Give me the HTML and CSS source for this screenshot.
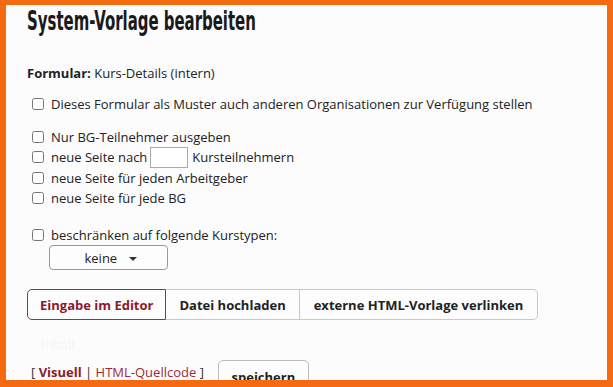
FILE: index.html
```html
<!DOCTYPE html>
<html lang="de">
<head>
  <meta charset="UTF-8">
  <title>System-Vorlage bearbeiten</title>
  <link rel="stylesheet" href="styles.css">
</head>
<body>

  <div class="frame">
    <h1><span>System-Vorlage bearbeiten</span></h1>

    <p class="formular"><b>Formular:</b> Kurs-Details (intern)</p>

    <label class="row single"><input type="checkbox"> Dieses Formular als Muster auch anderen Organisationen zur Verfügung stellen</label>

    <div class="group">
      <label class="row"><input type="checkbox"> Nur BG-Teilnehmer ausgeben</label>
      <label class="row"><input type="checkbox"> neue Seite nach <input type="text" class="num"> Kursteilnehmern</label>
      <label class="row"><input type="checkbox"> neue Seite für jeden Arbeitgeber</label>
      <label class="row"><input type="checkbox"> neue Seite für jede BG</label>
    </div>

    <label class="row single limit"><input type="checkbox"> beschränken auf folgende Kurstypen:</label>
    <button class="select">keine <span class="caret"></span></button>

    <div class="tabs">
      <button class="tab active">Eingabe im Editor</button>
      <button class="tab">Datei hochladen</button>
      <button class="tab">externe HTML-Vorlage verlinken</button>
    </div>

    <p class="faint">Inhalt</p>

    <div class="bottom">
      <span class="mode">[ <b>Visuell</b> | <a href="#">HTML-Quellcode</a> ]</span>
      <button class="save">speichern</button>
    </div>
  </div>

</body>
</html>
```

FILE: styles.css
```css
body {
  margin: 0;
  font-family: 'Open Sans', sans-serif;
  font-size: 13px;
  color: #222;
}

.frame {
  box-sizing: border-box;
  height: 387px;
  overflow: hidden;
  background-color: #fcfcfc;
  border-style: solid;
  border-color: #f36a10;
  border-width: 5px 6px 7px 6px;
  padding-left: 21px;
}

h1 {
  margin: 0;
  height: 32px;
  line-height: 32px;
  font-family: 'DejaVu Sans', sans-serif;
  font-stretch: condensed;
  font-weight: 600;
  font-size: 27px;
  color: #1a1a1a;
}

h1 span {
  display: inline-block;
  transform: scaleX(0.615);
  transform-origin: left center;
}

.formular {
  margin: 26px 0 0;
  line-height: 20px;
}

.row {
  display: flex;
  align-items: center;
  height: 20.5px;
  white-space: nowrap;
}

.row input[type="checkbox"] {
  margin: 0 7px 0 5px;
  width: 12px;
  height: 12px;
}

.single {
  margin-top: 11px;
}

.group {
  margin-top: 12px;
}

.limit {
  margin-top: 16px;
}

.num {
  box-sizing: border-box;
  width: 38px;
  height: 21px;
  margin: 0 4px 0 3px;
  border: 1px solid #aaa;
  background: #fff;
}

.select {
  display: block;
  box-sizing: border-box;
  width: 119px;
  height: 25px;
  margin: 0 0 0 22px;
  padding: 0 0 0 4px;
  border: 1px solid #999;
  border-radius: 4px;
  background: #fdfdfd;
  font-family: 'Open Sans', sans-serif;
  font-size: 13px;
  color: #222;
}

.caret {
  display: inline-block;
  margin-left: 8px;
  vertical-align: middle;
  border-left: 4px solid transparent;
  border-right: 4px solid transparent;
  border-top: 4px solid #333;
}

.tabs {
  display: flex;
  margin-top: 19px;
}

.tab {
  height: 31px;
  padding: 0 13px;
  border: 1px solid #c8c8c8;
  border-left: none;
  background: #fdfdfd;
  font-family: 'Open Sans', sans-serif;
  font-size: 13px;
  font-weight: bold;
  color: #222;
}

.tab.active {
  padding: 0 12px;
  border: 1px solid #a82a3a;
  border-radius: 5px 0 0 5px;
  color: #8b1a2b;
}

.tab:last-child {
  border-radius: 0 5px 5px 0;
  padding: 0 14px;
}

.faint {
  margin: 14px 0 0 14px;
  line-height: 20px;
  color: #f4f4f4;
}

.bottom {
  display: flex;
  align-items: flex-start;
  margin-top: 6px;
}

.mode {
  margin: 3px 0 0 4px;
  color: #333;
}

.mode b {
  color: #8b1a2b;
}

.mode a {
  color: #a0283a;
  text-decoration: none;
}

.save {
  box-sizing: border-box;
  width: 91px;
  height: 34px;
  margin-left: 14px;
  padding: 0;
  border: 1px solid #bbb;
  border-radius: 5px;
  background: #fdfdfd;
  font-family: 'Open Sans', sans-serif;
  font-size: 13px;
  font-weight: bold;
  color: #222;
}
```
